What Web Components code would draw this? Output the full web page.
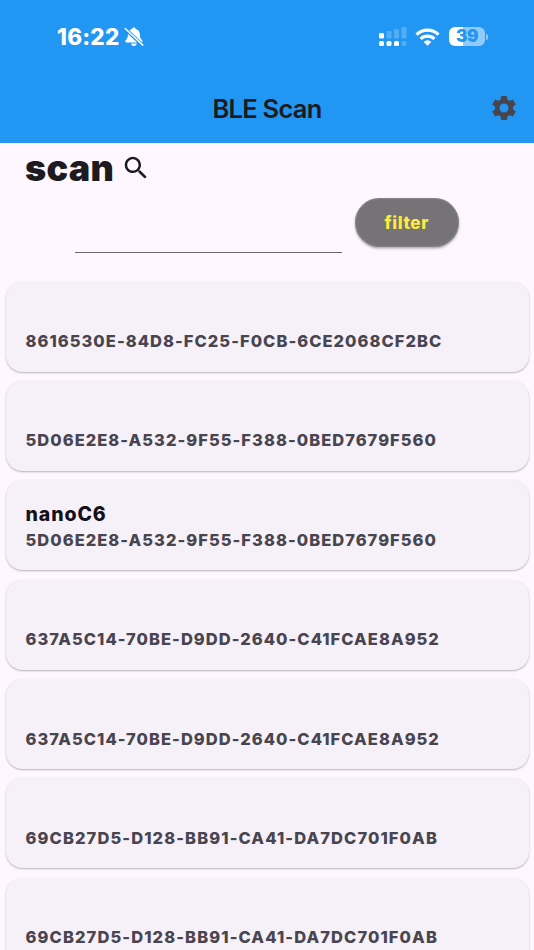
<!DOCTYPE html>
<html lang="en">
<head>
<meta charset="utf-8">
<title>BLE Scan</title>
<style>
html,body{margin:0;height:100%;overflow:hidden;background:#fef7ff}
</style>
</head>
<body>
<ble-app></ble-app>
<script>
const define = (name, html, setup) => customElements.define(name, class extends HTMLElement {
  constructor() {
    super();
    const t = document.createElement('template');
    t.innerHTML = html;
    this.attachShadow({mode: 'open'}).append(t.content.cloneNode(true));
  }
  connectedCallback() { if (setup) setup(this, this.shadowRoot); }
});

define('status-bar', `
<style>
:host{display:flex;align-items:center;height:74px;padding:0 46px 0 57px;box-sizing:border-box;color:#fff}
.time{font-size:22.500px;line-height:28px;font-weight:800;letter-spacing:.2px;width:67px;white-space:nowrap}
.right{margin-left:auto;display:flex;align-items:center;margin-top:-1px}
svg{display:block}
.battery{display:flex;align-items:center;margin-left:9px}
.level{width:36px;height:19px;border-radius:6px;background:linear-gradient(90deg,#fff 39%,#91cbfa 39%);color:#2196f3;font-size:17px;line-height:19px;font-weight:900;letter-spacing:-.3px;text-align:center}
.cap{width:2px;height:6px;margin-left:1px;border-radius:0 2px 2px 0;background:#91cbfa}
</style>
<span class="time">16:22</span>
<svg width="20" height="20" viewBox="0 0 20 20" fill="#fff"><path d="M9.8.6c-1 0-1.7.6-1.9 1.4C4.7 2.9 4 5.300 3.900 8c-.1 2.600-.7 3.500-1.800 4.700-.6.7-.9 1.100-.9 1.600 0 .7.500 1.100 1.300 1.100h14.800c.8 0 1.300-.4 1.300-1.100 0-.5-.3-.9-.9-1.600-1.200-1.200-1.700-2.100-1.800-4.700-.1-2.700-.8-5.100-4.100-6C11.600 1.200 10.900.6 9.800.6z"/><path d="M7 16.600h5.800c-.2 1.500-1.300 2.500-2.900 2.500s-2.700-1-2.900-2.500z"/><path d="M1 1.600 18.600 18.200" stroke="#2196f3" stroke-width="3.600"/><path d="M1.200 1.500 18.800 18.100" stroke="#fff" stroke-width="1.500" stroke-linecap="round"/></svg>
<div class="right">
<svg width="28" height="19" viewBox="0 0 28 19" fill="#fff"><rect y="6" width="5" height="5.500" rx="1.300"/><g opacity=".22"><rect x="7.500" y="4" width="5" height="7.500" rx="1.300"/><rect x="15" y="2" width="5" height="9.500" rx="1.300"/><rect x="22.500" y="0" width="5" height="11.500" rx="1.300"/><rect x="22.500" y="14" width="5" height="5" rx="1.500"/></g><rect y="14" width="5" height="5" rx="1.500"/><rect x="7.500" y="14" width="5" height="5" rx="1.500"/><rect x="15" y="14" width="5" height="5" rx="1.500"/></svg>
<svg width="25" height="18" viewBox="0 0 25 18" style="margin-left:8px" fill="none" stroke="#fff" stroke-width="3.200"><path d="M1.500 6.600a16 16 0 0 1 22 0"/><path d="M5.600 10.800a10 10 0 0 1 13.800 0"/><path d="M12.500 17.700 8.700 13.900a5.400 5.400 0 0 1 7.600 0z" fill="#fff" stroke="none"/></svg>
<div class="battery"><div class="level">39</div><div class="cap"></div></div>
</div>`);

define('app-bar', `
<style>
:host{display:block;height:143px;background:#2196f3}
.bar{display:grid;grid-template-columns:60px 1fr 60px;align-items:center;height:69px}
h1{grid-column:2;margin:0;text-align:center;font-size:25.500px;line-height:32px;font-weight:600;letter-spacing:-.75px;color:#1d1b20;padding-top:1px}
svg{justify-self:center;margin-top:-1px}
</style>
<status-bar></status-bar>
<div class="bar"><h1><slot></slot></h1>
<svg width="30" height="30" viewBox="0 0 24 24" fill="#49454f"><path d="M19.140 12.940c.04-.3.060-.61.060-.94 0-.32-.02-.64-.07-.94l2.030-1.580c.18-.14.23-.41.120-.61l-1.920-3.320c-.12-.22-.37-.29-.59-.22l-2.390.96c-.5-.38-1.030-.7-1.620-.94l-.36-2.540c-.04-.24-.24-.41-.48-.41h-3.840c-.24 0-.43.17-.47.41l-.36 2.540c-.59.24-1.130.57-1.620.94l-2.390-.96c-.22-.08-.47 0-.59.22L2.740 8.870c-.12.21-.08.470.12.610l2.030 1.580c-.05.3-.09.630-.09.940s.020.640.070.940l-2.030 1.580c-.18.140-.23.410-.12.610l1.920 3.320c.12.220.37.290.59.220l2.390-.96c.5.380 1.030.7 1.620.940l.36 2.540c.050.240.240.410.480.410h3.840c.24 0 .44-.17.470-.41l.36-2.540c.59-.24 1.130-.56 1.620-.94l2.390.96c.22.080.470 0 .59-.22l1.920-3.320c.12-.22.070-.47-.12-.61l-2.010-1.580zM12 15.600c-1.980 0-3.600-1.620-3.600-3.600s1.620-3.600 3.600-3.600 3.600 1.620 3.600 3.600-1.620 3.600-3.600 3.600z"/></svg></div>`);

define('scan-heading', `
<style>
:host{display:flex;align-items:center;height:50px;padding-left:25px;color:#1d1b20}
h2{margin:0;font-size:36px;line-height:48px;font-weight:900;letter-spacing:.3px;width:96px}
</style>
<h2><slot></slot></h2>
<svg width="30" height="30" viewBox="0 0 24 24" fill="#1d1b20"><path d="M15.500 14h-.79l-.28-.27C15.410 12.590 16 11.110 16 9.500 16 5.910 13.090 3 9.500 3S3 5.910 3 9.500 5.910 16 9.500 16c1.610 0 3.090-.59 4.230-1.570l.27.280v.790l5 4.990L20.490 19l-4.990-5zm-6 0C7.010 14 5 11.990 5 9.500S7.010 5 9.500 5 14 7.010 14 9.500 11.990 14 9.500 14z"/></svg>`);

define('filter-row', `
<style>
:host{display:flex;align-items:flex-start;gap:12.500px;padding:5px 75px 0;height:84px;box-sizing:border-box}
input{all:unset;box-sizing:border-box;width:267px;height:55px;border-bottom:1px solid #6d6970}
button{all:unset;box-sizing:border-box;width:104.500px;height:49px;border-radius:25px;background:#757375;color:#ffeb3b;font-size:17px;font-weight:800;letter-spacing:.6px;text-align:center;line-height:50px;box-shadow:inset 0 0 2px #aaa,0 1.500px 2.500px #0005}
</style>
<input aria-label="Filter"><button><slot></slot></button>`);

define('device-card', `
<style>
:host{display:flex;flex-direction:column;justify-content:flex-end;box-sizing:border-box;height:90px;margin:0 5.500px 9.400px;padding:0 20px 17.500px;border-radius:16.500px;background:#f6f1f9;box-shadow:0 1px 2px #00000040,0 .500px 2px #0000000a;flex:none}
.name{font-size:19.500px;line-height:26px;font-weight:800;letter-spacing:.9px;color:#141218}
.id{font-size:16.500px;line-height:26px;font-weight:800;letter-spacing:var(--tracking,1.030px);color:#49454f;white-space:nowrap}
</style>
<div class="name"></div><div class="id"><slot></slot></div>`, (el, r) => {
  r.querySelector('.name').textContent = el.getAttribute('name') || '';
});

define('ble-app', `
<style>
:host{display:flex;flex-direction:column;width:534px;height:950px;overflow:hidden;background:#fef7ff;font-family:Inter,"Liberation Sans",sans-serif}
app-bar,scan-heading,filter-row{flex:none}
.list{display:flex;flex-direction:column;padding-top:4.500px}
.wide{--tracking:1.100px}
</style>
<app-bar>BLE Scan</app-bar>
<scan-heading>scan</scan-heading>
<filter-row>filter</filter-row>
<div class="list">
<device-card>8616530E-84D8-FC25-F0CB-6CE2068CF2BC</device-card>
<device-card>5D06E2E8-A532-9F55-F388-0BED7679F560</device-card>
<device-card name="nanoC6">5D06E2E8-A532-9F55-F388-0BED7679F560</device-card>
<device-card>637A5C14-70BE-D9DD-2640-C41FCAE8A952</device-card>
<device-card>637A5C14-70BE-D9DD-2640-C41FCAE8A952</device-card>
<device-card class="wide">69CB27D5-D128-BB91-CA41-DA7DC701F0AB</device-card>
<device-card class="wide">69CB27D5-D128-BB91-CA41-DA7DC701F0AB</device-card>
</div>`);
</script>
</body>
</html>
